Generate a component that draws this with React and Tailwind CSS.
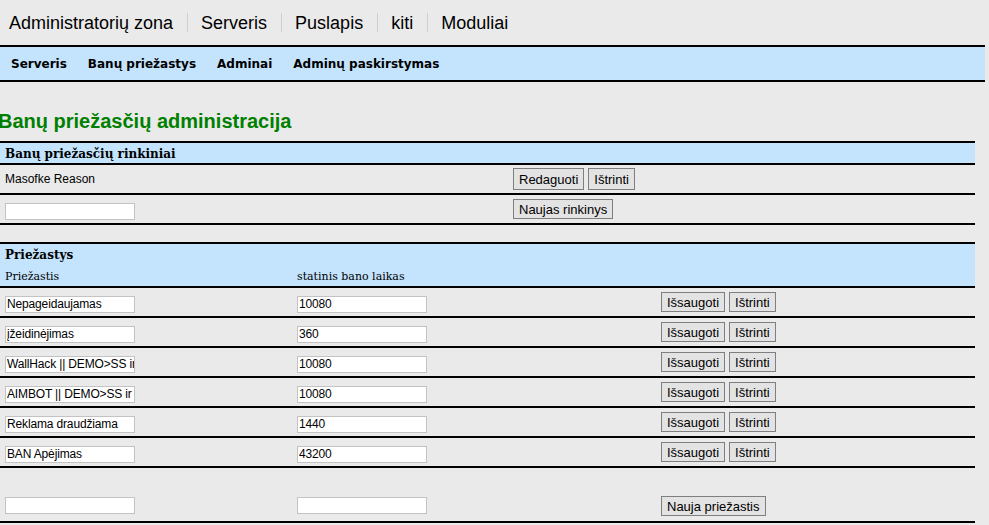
import React from 'react';

const topNav = ['Administratorių zona', 'Serveris', 'Puslapis', 'kiti', 'Moduliai'];
const subNav = ['Serveris', 'Banų priežastys', 'Adminai', 'Adminų paskirstymas'];

const reasons = [
  { name: 'Nepageidaujamas', time: '10080' },
  { name: 'įžeidinėjimas', time: '360' },
  { name: 'WallHack || DEMO>SS ir screenshot', time: '10080' },
  { name: 'AIMBOT || DEMO>SS ir PrintScreen', time: '10080' },
  { name: 'Reklama draudžiama', time: '1440' },
  { name: 'BAN Apėjimas', time: '43200' },
];

const sans = "font-['Liberation_Sans',Arial,sans-serif]";

function Field({ value }) {
  return (
    <input
      type="text"
      defaultValue={value}
      className="w-[130px] h-[17px] bg-white border border-[#c3c3c3] pl-[1px] pr-0 text-[12px] tracking-[-0.15px] text-black font-['Liberation_Sans',Arial,sans-serif] outline-none"
    />
  );
}

function Btn({ children, tall }) {
  return (
    <button
      className={`${tall ? 'h-[22px]' : 'h-[20px]'} px-[5px] bg-[#e3e3e3] border border-[#7f7f7f] text-[13px] leading-none text-black font-['Liberation_Sans',Arial,sans-serif]`}
    >
      {children}
    </button>
  );
}

export default function App() {
  return (
    <div className="min-h-[525px] w-[989px] bg-[#eaeaea] text-black overflow-hidden">
      {/* top menu */}
      <div className="h-[45px] flex items-center pl-[9px]">
        {topNav.map((item, i) => (
          <div key={item} className="flex items-center">
            {i > 0 && <span className="ml-[14px] mr-[13px] w-px h-[19px] bg-[#cfcfcf]" />}
            <span className={`${sans} text-[18px] leading-none`}>{item}</span>
          </div>
        ))}
      </div>

      {/* sub menu */}
      <div className="w-[985px] h-[37px] bg-[#c4e4fd] border-y-2 border-black flex items-center pl-[11px] gap-[21px]">
        {subNav.map((item) => (
          <span key={item} className="font-['DejaVu_Sans',Verdana,sans-serif] font-bold text-[12px] leading-none">
            {item}
          </span>
        ))}
      </div>

      <h1 className={`${sans} ml-[-2px] mt-[26px] mb-[7px] text-[20px] leading-[26px] font-bold text-[#008000]`}>
        Banų priežasčių administracija
      </h1>

      {/* sets */}
      <div className="w-[975px]">
        <div className="h-[24px] bg-[#c4e4fd] border-y-2 border-black flex items-center pl-[5px] pt-[1px]">
          <span className="font-['DejaVu_Serif',Georgia,serif] font-bold text-[12px] leading-none">Banų priežasčių rinkiniai</span>
        </div>
        <div className="h-[30px] border-b-2 border-black flex items-center pl-[5px]">
          <span className={`${sans} text-[12px] w-[508px]`}>Masofke Reason</span>
          <div className="flex gap-[4px]">
            <Btn tall>Redaguoti</Btn>
            <Btn tall>Ištrinti</Btn>
          </div>
        </div>
        <div className="h-[30px] border-b-2 border-black flex items-center pl-[5px]">
          <div className="w-[508px]">
            <Field value="" />
          </div>
          <Btn>Naujas rinkinys</Btn>
        </div>
      </div>

      {/* reasons */}
      <div className="w-[975px] mt-[17px]">
        <div className="h-[46px] bg-[#c4e4fd] border-y-2 border-black flex flex-col justify-center gap-[10px] pl-[5px] font-['DejaVu_Serif',Georgia,serif] leading-none">
          <span className="font-bold text-[12px]">Priežastys</span>
          <div className="flex text-[11px]">
            <span className="w-[292px]">Priežastis</span>
            <span>statinis bano laikas</span>
          </div>
        </div>
        {reasons.map((r) => (
          <div key={r.name} className="h-[30px] border-b-2 border-black flex items-center pl-[5px]">
            <div className="w-[292px]">
              <Field value={r.name} />
            </div>
            <div className="w-[364px]">
              <Field value={r.time} />
            </div>
            <div className="flex gap-[4px]">
              <Btn>Išsaugoti</Btn>
              <Btn>Ištrinti</Btn>
            </div>
          </div>
        ))}
        <div className="h-[55px] border-b-2 border-black flex items-end pb-[5px] pl-[5px]">
          <div className="w-[292px] pb-[1px]">
            <Field value="" />
          </div>
          <div className="w-[364px] pb-[1px]">
            <Field value="" />
          </div>
          <Btn>Nauja priežastis</Btn>
        </div>
      </div>
    </div>
  );
}
